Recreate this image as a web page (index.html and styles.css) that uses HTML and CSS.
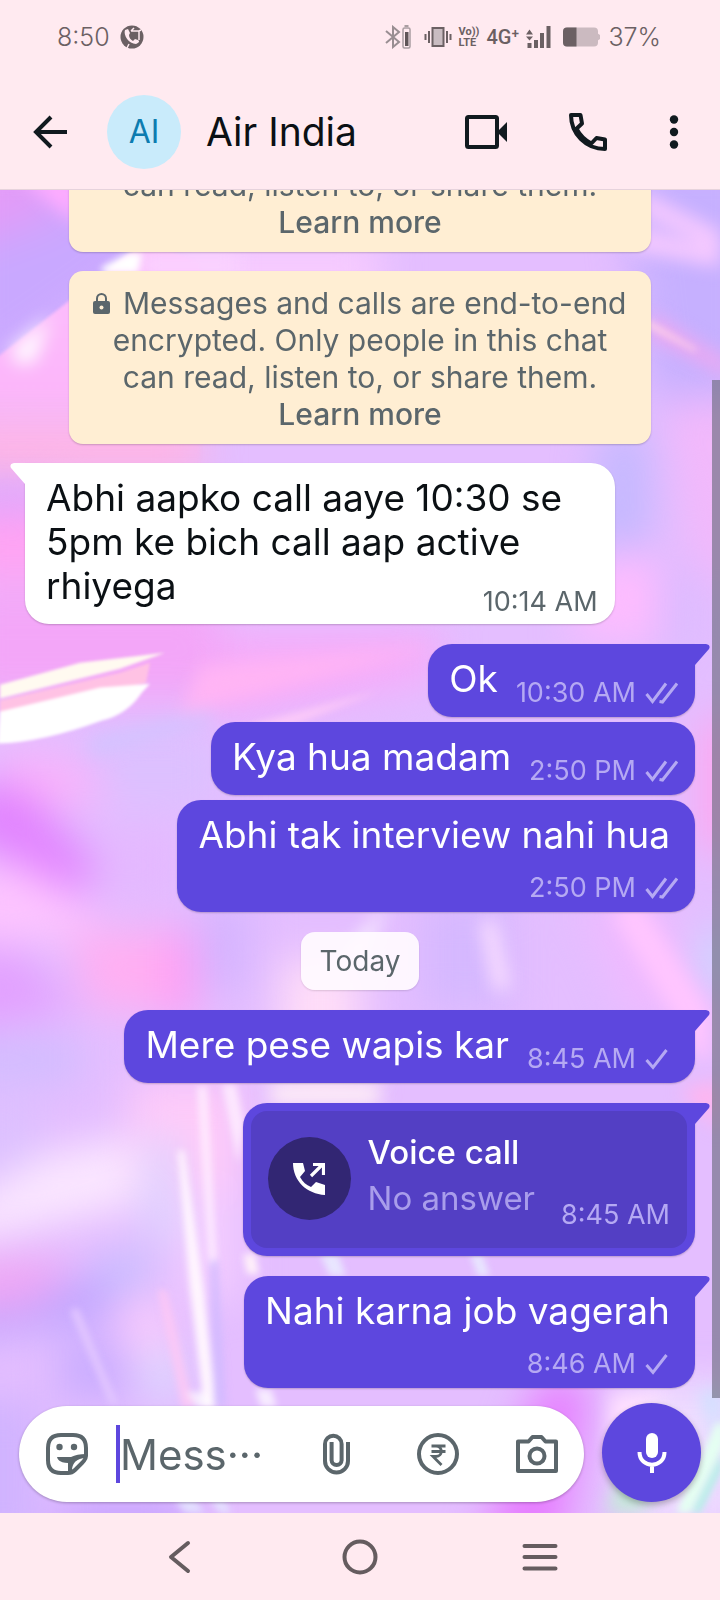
FILE: index.html
```html
<!DOCTYPE html>
<html lang="en">
<head>
<meta charset="utf-8">
<meta name="viewport" content="width=device-width, initial-scale=1">
<title>Air India</title>
<link rel="stylesheet" href="styles.css">
</head>
<body>
<svg class="defs" width="0" height="0" aria-hidden="true">
  <symbol id="check" viewBox="0 0 33 22"><path d="M1.500 12l6.500 7.500L21.500 2" fill="none" stroke="currentColor" stroke-width="3"/></symbol>
  <symbol id="checks" viewBox="0 0 33 22"><path d="M1.500 12l6 7.500L21 1.500M14.500 19.500l3 .5L32 1.500" fill="none" stroke="currentColor" stroke-width="3"/></symbol>
  <symbol id="tail" viewBox="0 0 16 24"><path d="M0 0h12q5 1 3 5L1 21v3H0z" fill="currentColor"/></symbol>
</svg>
<div class="app">
  <div class="status">
    <span class="status-time">8:50</span>
    <svg width="24" height="24" viewBox="0 0 24 24"><circle cx="12" cy="12" r="11.500" fill="#6b6063"/><path d="M5 5c-2 5 4 14 11 14 3-1 4-3 2-4l-3-1-2 2c-2-1-4-3-4-6l1-2-2-4z" fill="#ffeaf0"/><path d="M11 6l3-3M11 6h8v9M19 6l2-1M9 19l-2 4" fill="none" stroke="#ffeaf0" stroke-width="1.500"/></svg>
    <div class="status-right">
      <svg width="26" height="24" viewBox="0 0 26 24"><path d="M1 6l13 11-6 5V2l6 5L1 18" fill="none" stroke="#998e92" stroke-width="2"/><rect x="18" y="3" width="7" height="20" rx="1.500" fill="none" stroke="#a99da1" stroke-width="1.500"/><path d="M19.500 1h4" stroke="#a99da1" stroke-width="2"/><rect x="20" y="7" width="3.500" height="14" fill="#5f5558"/></svg>
      <svg class="vibrate" width="28" height="22" viewBox="0 0 28 22"><rect x="8.500" y="2" width="11" height="18" fill="#c9bcc1" stroke="#6b6063" stroke-width="2"/><path d="M1.500 8v6M5 5v12M23 5v12M26.500 8v6" stroke="#6b6063" stroke-width="2"/></svg>
      <span class="volte"><span>Vo))</span><span>LTE</span></span>
      <span class="net">4G⁺</span>
      <svg width="25" height="22" viewBox="0 0 25 22"><path d="M0 8.500l3.500-5 3.500 5zM0 10.500h7l-3.500 4zM1.500 17h4v5h-4zM8 14h4v8H8zM14 7h4v15h-4zM20.500 0h4v22h-4z" fill="#6b6063"/></svg>
      <svg class="battery" width="38" height="20" viewBox="0 0 38 20"><rect width="35" height="19" y=".5" rx="4" fill="#cbbac0"/><path d="M34 6l3 2v4l-3 2z" fill="#cbbac0"/><path d="M13.500 .5H4a4 4 0 0 0-4 4v11a4 4 0 0 0 4 4h9.500z" fill="#6b6063"/></svg>
      <span class="status-time">37%</span>
    </div>
  </div>
  <header class="header">
    <button class="icon-btn" aria-label="Back"><svg width="34" height="34" viewBox="0 0 34 34"><path d="M18 2L3 17l15 15M3 17h31" fill="none" stroke="#111a1f" stroke-width="4"/></svg></button>
    <div class="avatar">AI</div>
    <h1 class="title">Air India</h1>
    <div class="actions">
      <button class="icon-btn" aria-label="Video call"><svg width="42" height="34" viewBox="0 0 42 34"><rect x="2" y="2" width="30" height="30" rx="1.500" fill="none" stroke="#111a1f" stroke-width="4"/><path d="M32 17L42 7v20z" fill="#111a1f"/></svg></button>
      <button class="icon-btn" aria-label="Voice call"><svg width="38" height="38" viewBox="0 0 38 38"><path d="M2 2h9.500L13 10.500l-5.500 5.200C11 22.500 15.500 27 22.300 30.500L27.500 25l8.500 1.500V36C17 36 2 21 2 2z" fill="none" stroke="#111a1f" stroke-width="4" stroke-linejoin="round"/></svg></button>
      <button class="icon-btn" aria-label="More options"><svg width="10" height="34" viewBox="0 0 10 34"><g fill="#111a1f"><circle cx="5" cy="4.500" r="4.200"/><circle cx="5" cy="17" r="4.200"/><circle cx="5" cy="29.500" r="4.200"/></g></svg></button>
    </div>
  </header>
  <main class="chat">
    <svg class="wallpaper" viewBox="0 189 720 1324" preserveAspectRatio="none" aria-hidden="true">
      <defs>
        <filter id="b30" x="-60%" y="-60%" width="220%" height="220%" color-interpolation-filters="sRGB"><feGaussianBlur stdDeviation="20"/></filter>
        <filter id="b10" x="-60%" y="-60%" width="220%" height="220%" color-interpolation-filters="sRGB"><feGaussianBlur stdDeviation="9"/></filter>
        <filter id="b4" x="-30%" y="-30%" width="160%" height="160%" color-interpolation-filters="sRGB"><feGaussianBlur stdDeviation="3.500"/></filter>
        <filter id="b2" x="-30%" y="-30%" width="160%" height="160%" color-interpolation-filters="sRGB"><feGaussianBlur stdDeviation="1.500"/></filter>
        <linearGradient id="facet" x1="0" y1="0" x2="0" y2="1"><stop offset="0" stop-color="#fcc0fd"/><stop offset=".6" stop-color="#fcb6fa"/><stop offset="1" stop-color="#ffb4e2" stop-opacity="0"/></linearGradient>
      </defs>
      <rect y="189" width="720" height="1324" fill="#e4beff"/>
      <g filter="url(#b30)">
        <path d="M-40 150h200v110L-40 400z" fill="#c9a8ff"/>
        <path d="M160 240h220v60H160z" fill="#f8ccff"/>
        <path d="M-40 150h70l40 60L-40 250z" fill="#e29cf8"/>
        <path d="M620 150h140v240l-110 10z" fill="#c6b0ff"/>
        <path d="M600 430h50v120l-60 10z" fill="#c3b8ff"/>
        <path d="M665 400h80v190l-50-20z" fill="#f2b8fb"/>
        <path d="M600 550h60l10 90h-100z" fill="#fdbcff"/>
        <path d="M665 560h20v90h-20z" fill="#cdb8ff"/>
        <path d="M-40 420h240v50H-40z" fill="#ffb4e2"/>
        <path d="M-40 480h90v30H-40z" fill="#d8a5ff"/>
        <path d="M-40 510h120v70H-40z" fill="#ffa3f3"/>
        <path d="M-40 590h260v110H-40z" fill="#f3a6f8"/>
        <path d="M220 630h220v50l-220 40z" fill="#f6acfa"/>
        <path d="M80 735h140v70H80z" fill="#dcc0ff"/>
        <path d="M0 750l90 10 20 40-110 10z" fill="#f9b2fb"/>
        <path d="M-40 785l60 0 90 90-30 20-120-60z" fill="#e183ff"/>
        <path d="M-40 870l60-5 80 50-20 25H-40z" fill="#fdc4ff"/>
        <path d="M90 830h90v70H90z" fill="#e4b8ff"/>
        <path d="M-40 950h60l60 60-120 20z" fill="#e2a0ff"/>
        <path d="M70 930h110l20 80H90z" fill="#ffaff2"/>
        <path d="M165 930h30v90h-30z" fill="#ff9cf4"/>
        <path d="M-40 1040h120v40H-40z" fill="#cfbcff"/>
        <path d="M200 900h50v90h-50z" fill="#d4b4ff"/>
        <path d="M420 900h90v110h-90z" fill="#d5b8ff"/>
        <path d="M580 900l80 0 60 120h-90z" fill="#efbaff"/>
        <path d="M700 720h50v130h-50z" fill="#ffa6f0"/>
        <path d="M695 930h50v60h-50z" fill="#cfd4ff"/>
        <path d="M280 960h80v120h-80z" fill="#ffddf8"/>
        <path d="M-40 1100h80v60l-80 30z" fill="#dcc0ff"/>
        <path d="M130 1080h110v110H130z" fill="#ffcbf9"/>
        <path d="M180 1190h60v110h-60z" fill="#f3ccff"/>
        <path d="M-40 1205l80-50 90-20 10 70-90 20-90 20z" fill="#fae6ff"/>
        <path d="M145 1135h35v110h-35z" fill="#dcd2ff"/>
        <path d="M-40 1260h110l-20 50-90 10z" fill="#f0a6f4"/>
        <path d="M-40 1310l60 0 60-30 60-20-40 60-140 20z" fill="#bca4ff"/>
        <path d="M100 1255h50v30h-50z" fill="#c2bfff"/>
        <path d="M60 1340h60l10 60H60z" fill="#c8acff"/>
        <path d="M120 1300h40l30 80h-50z" fill="#f9cbfc"/>
        <path d="M145 1350h35v50h-35z" fill="#d8d8ff"/>
        <path d="M-40 1400h80v150h-80z" fill="#d0b3ff"/>
        <path d="M60 1500h130v50H60z" fill="#c5a2ff"/>
        <path d="M540 1380h50l-30 170h-80z" fill="#e67cff"/>
        <path d="M625 1380h120v150H625z" fill="#eedcff"/>
      </g>
      <g filter="url(#b2)">
        <path d="M145 240L-10 362v120h210V262z" fill="url(#facet)"/>
      </g>
      <g filter="url(#b10)">
        <path d="M18 175h60v50z" fill="#ffacff"/>
        <path d="M640 190l80 40v20l-80-38zM640 228l80 20v18l-90-18z" fill="#f8caff"/>
        <path d="M650 312l80 50v14l-80-40z" fill="#f0a8f0"/>
        <path d="M200 665l240-20-260 70z" fill="#ffb4f4"/>
        <path d="M90 740l120-30v12l-120 32z" fill="#d0c4ff"/>
        <path d="M340 960l50-60-30 60z" fill="#fff"/>
        <path d="M480 920l15 70 15-2-15-68z" fill="#fbe0ff"/>
        <path d="M610 910l90 150h10v-50l-70-110z" fill="#ffc5ff"/>
        <path d="M270 1084h110v20H270z" fill="#fff0f6"/>
        <path d="M680 1090l40-10v50z" fill="#ffb5ef"/>
        <path d="M605 1513l40-100 20 0-20 100z" fill="#c4e8d8"/>
        <path d="M700 1390h20v60z" fill="#c9e4ff"/>
        <path d="M610 1394h60l-60 60z" fill="#ffe0ff"/>
        <path d="M10 350l40-34-15 44-15 4z" fill="#fff"/>
        <path d="M140 252h100v24H140z" fill="#fad2ff"/>
      </g>
      <g filter="url(#b4)">
        <path d="M102 266l26-14h14l-4 20h-36z" fill="#fff"/>
        <path d="M646 318l50 30 0 3-50-26z" fill="#ffd2e8"/>
        <path d="M250 724l130-34-116 46z" fill="#ffcdf8" opacity=".8"/>
        <path d="M197 1086l10 0 10 180-8 0zM222 1084h14l8 40-6 40z" fill="#fff0ff" opacity=".8"/>
        <path d="M178 1150l6 0 20 140 12 118-12 0-14-118z" fill="#fff6fe"/>
        <path d="M158 1290l8 0 28 118h-12z" fill="#ffc8f4" opacity=".8"/>
        <path d="M210 1260l8 0 8 146h-12z" fill="#cdb9ff" opacity=".7"/>
        <path d="M243 1254h12l4 20h-12z" fill="#fff0fa"/>
        <path d="M70 1310l8-2 40 96h-8z" fill="#e2c6ff"/>
        <path d="M320 1254h18l8 22h-16zM470 1254h12l8 22h-12z" fill="#eaf0ff" opacity=".8"/>
        <path d="M186 1392h18l10 16h-16zM255 1389h16l6 18h-16z" fill="#fff" opacity=".7"/>
        <path d="M175 1500h20l10 13h-20zM210 1500h14l8 13h-12z" fill="#e5eaff" opacity=".8"/>
        <path d="M676 1513l40-90 8 0v22l-34 68z" fill="#e4fff2"/>
        <path d="M692 1513l30-60v16l-22 44z" fill="#b2f0e6"/>
      </g>
      <g filter="url(#b2)">
        <path d="M0 684l80-22 85-10-45 16L0 698z" fill="#fffaf0"/>
        <path d="M0 700l120-28 30-10-4 20-146 30z" fill="#ffc2e4"/>
        <path d="M0 711l100-24 50-4-8 9q-15 22-40 28-60 22-104 23z" fill="#fff"/>
      </g>
    </svg>
    <div class="messages">
      <div class="notice">can read, listen to, or share them. <a class="learn" href="#">Learn more</a></div>
      <div class="notice spaced"><svg class="lock" width="17" height="21" viewBox="0 0 17 21"><path d="M4 8V5.500a4.500 4.500 0 0 1 9 0V8" fill="none" stroke="#5b666b" stroke-width="2"/><rect y="8" width="17" height="13" rx="2" fill="#5b666b"/><circle cx="8.500" cy="14.500" r="2" fill="#ffeed3"/></svg> Messages and calls are end-to-end encrypted. Only people in this chat can read, listen to, or share them. <a class="learn" href="#">Learn more</a></div>
      <div class="bubble in spaced"><svg class="tail" width="16" height="24"><use href="#tail"/></svg><p class="text">Abhi aapko call aaye 10:30 se 5pm ke bich call aap active rhiyega<span class="meta">10:14 AM</span></p></div>
      <div class="bubble out spaced"><svg class="tail" width="16" height="24"><use href="#tail"/></svg><p class="text">Ok</p><div class="meta">10:30 AM<svg width="33" height="22"><use href="#checks"/></svg></div></div>
      <div class="bubble out"><p class="text">Kya hua madam</p><div class="meta">2:50 PM<svg width="33" height="22"><use href="#checks"/></svg></div></div>
      <div class="bubble out stacked"><p class="text">Abhi tak interview nahi hua</p><div class="meta">2:50 PM<svg width="33" height="22"><use href="#checks"/></svg></div></div>
      <div class="day spaced">Today</div>
      <div class="bubble out spaced"><svg class="tail" width="16" height="24"><use href="#tail"/></svg><p class="text">Mere pese wapis kar</p><div class="meta">8:45 AM<svg width="33" height="22"><use href="#check"/></svg></div></div>
      <div class="bubble out call spaced"><svg class="tail" width="16" height="24"><use href="#tail"/></svg>
        <div class="call-card">
          <div class="call-icon"><svg width="32" height="32" viewBox="0 0 32 32"><path d="M0 0h10l2 8-5 6c3 5 6 8 11 10l5-5 9 3v10C14 31 0 18 0 0z" fill="#fff"/><path d="M18 13L29 2M20 1.500h10.500V12" fill="none" stroke="#fff" stroke-width="3.200"/></svg></div>
          <div class="call-text"><strong>Voice call</strong><span>No answer</span></div>
          <div class="meta">8:45 AM</div>
        </div>
      </div>
      <div class="bubble out stacked spaced"><svg class="tail" width="16" height="24"><use href="#tail"/></svg><p class="text">Nahi karna job vagerah</p><div class="meta">8:46 AM<svg width="33" height="22"><use href="#check"/></svg></div></div>
      <div class="scrollbar"></div>
    </div>
    <form class="composer">
      <div class="field">
        <button type="button" class="icon-btn" aria-label="Stickers"><svg width="42" height="42" viewBox="0 0 42 42"><path d="M15 2h12q13 0 13 13v8q0 3-4 7l-7 7q-3 3-7 3h-7Q2 40 2 27V15Q2 2 15 2z" fill="none" stroke="#5b666b" stroke-width="4"/><circle cx="13.500" cy="14" r="3.200" fill="#5b666b"/><circle cx="28" cy="14" r="3.200" fill="#5b666b"/><path d="M11 24h14c4-2 9-3 15-3v4c-8 0-14 4-14 13h-4v-8c-6 0-10-2-11-6z" fill="#5b666b"/></svg></button>
        <span class="caret"></span>
        <input class="input" type="text" aria-label="Message" placeholder="Mess···">
        <button type="button" class="icon-btn" aria-label="Attach"><svg width="28" height="42" viewBox="0 0 28 42"><path d="M25 9v19a11.500 11.500 0 0 1-23 0V11a8.300 8.300 0 0 1 16.600 0v16a5 5 0 0 1-10 0V9" fill="none" stroke="#5b666b" stroke-width="4"/></svg></button>
        <button type="button" class="icon-btn pay" aria-label="Pay"><svg width="42" height="42" viewBox="0 0 42 42"><circle cx="21" cy="21" r="19" fill="none" stroke="#5b666b" stroke-width="4"/><path d="M14.500 13h14M14.500 18.500h14M15 13h4c7 0 7 10.500 0 10.500h-3l8.500 8.500" fill="none" stroke="#5b666b" stroke-width="2.800"/></svg></button>
        <button type="button" class="icon-btn camera" aria-label="Camera"><svg width="42" height="38" viewBox="0 0 42 38"><path d="M2 6.500h10.500l4-4.500h9l4 4.500H40V36H2z" fill="none" stroke="#5b666b" stroke-width="4" stroke-linejoin="round"/><circle cx="21" cy="21" r="7.500" fill="none" stroke="#5b666b" stroke-width="4"/></svg></button>
      </div>
      <button type="button" class="mic" aria-label="Record voice message"><svg width="30" height="40" viewBox="0 0 30 40"><rect x="9" width="12" height="25" rx="6" fill="#fff"/><path d="M2.500 19c0 17 25 17 25 0M15 31v9" fill="none" stroke="#fff" stroke-width="4"/></svg></button>
    </form>
  </main>
  <nav class="nav">
    <button class="icon-btn" aria-label="Back"><svg width="24" height="34" viewBox="0 0 24 34"><path d="M20 3L3 17l17 14" fill="none" stroke="#655c5f" stroke-width="4" stroke-linecap="round" stroke-linejoin="round"/></svg></button>
    <button class="icon-btn" aria-label="Home"><svg width="36" height="36" viewBox="0 0 36 36"><circle cx="18" cy="18" r="15.500" fill="none" stroke="#655c5f" stroke-width="4"/></svg></button>
    <button class="icon-btn" aria-label="Recent apps"><svg width="36" height="28" viewBox="0 0 36 28"><path d="M2.500 3h31M2.500 14h31M2.500 25.500h31" stroke="#655c5f" stroke-width="4" stroke-linecap="round"/></svg></button>
  </nav>
</div>
</body>
</html>
```

FILE: styles.css
```css
* { box-sizing: border-box; }
body { margin: 0; font-family: Inter, Roboto, sans-serif; font-weight: 400; }
button { font: inherit; border: 0; padding: 0; background: none; }
svg { display: block; flex: none; }
.defs { position: absolute; }
.app { display: flex; flex-direction: column; height: 100vh; background: #ffeaf0; }

.status { display: flex; align-items: center; gap: 10px; padding: 22px 59px 0 57px; height: 52px; color: #6b6063; font-weight: 300; }
.status-time { font-size: 25px; line-height: 30px; }
.status-right { display: flex; align-items: center; gap: 7px; margin-left: auto; }
.vibrate { margin-left: 6px; }
.volte { display: flex; flex-direction: column; font: 700 11px/11px Roboto, sans-serif; }
.net { font: 500 20px/24px Roboto, sans-serif; }
.battery { margin-left: 5px; }

.header { display: flex; align-items: center; height: 138px; padding: 22px 41px 0 33px; border-bottom: 1px solid #e6d3dc; }
.icon-btn { display: flex; align-items: center; justify-content: center; flex: none; }
.avatar { display: flex; align-items: center; justify-content: center; width: 74px; height: 74px; margin: 0 25px 0 40px; border-radius: 50%; background: #c9ebfb; color: #0c7cb0; font-size: 32px; flex: none; }
.title { flex: 1; margin: 0; font-size: 39px; line-height: 48px; font-weight: 400; color: #0b1014; }
.actions { display: flex; align-items: center; gap: 62px; }

.chat { position: relative; flex: 1; min-height: 0; display: flex; flex-direction: column; }
.wallpaper { position: absolute; inset: 0; width: 100%; height: 100%; }
.messages { position: relative; flex: 1; min-height: 0; overflow: hidden; display: flex; flex-direction: column; justify-content: flex-end; gap: 5px; padding: 0 25px 11px; }
.messages > * { flex: none; }
.spaced { margin-top: 15px; }
.scrollbar { position: absolute; right: 0; top: 190px; bottom: 1px; width: 8px; background: #6f6f83a8; }

.notice { align-self: center; width: 87%; padding: 14px 16px 11px; border-radius: 14px; background: #ffeed3; color: #5b666b; font-size: 30px; line-height: 37px; text-align: center; box-shadow: 0 1px 2px #0003; }
.notice.spaced, .in.spaced { margin-top: 14px; }
.lock { display: inline-block; margin-right: 4px; }
.learn { display: block; color: inherit; font-weight: 500; text-decoration: none; }

.bubble { position: relative; display: flex; align-items: flex-end; padding: 13px 17px 10px 21px; border-radius: 24px; box-shadow: 0 1px 2px #0003; }
.text { margin: 0; padding-bottom: 6px; font-size: 37px; line-height: 44px; }
.meta { display: flex; align-items: center; gap: 9px; font-size: 27px; line-height: 28px; white-space: nowrap; }
.tail { position: absolute; top: 0; }
.in { align-self: flex-start; display: block; max-width: 88%; padding-bottom: 8px; background: #fff; color: #0b1014; border-top-left-radius: 0; }
.in .meta { float: right; margin-top: 24px; color: #5b666b; }
.in > .tail { left: -15px; color: #fff; transform: scaleX(-1); }
.out { align-self: flex-end; gap: 18px; background: #5d47de; color: #fff; }
.out > .tail { right: -15px; color: #5d47de; }
.out:has(.tail) { border-top-right-radius: 0; }
.out .meta { color: #b5a9f3; }
.stacked { flex-direction: column; gap: 11px; }
.stacked > .text { padding-right: 8px; }

.day { align-self: center; padding: 11px 19px; border-radius: 14px; background: #fffafff0; color: #5b666b; font-size: 28px; line-height: 36px; box-shadow: 0 1px 2px #0002; }

.call { padding: 8px; }
.call-card { display: flex; align-items: center; padding: 17px 17px 19px; border-radius: 16px; background: #533fc4; min-height: 137px; }
.call-icon { display: flex; align-items: center; justify-content: center; width: 83px; height: 83px; border-radius: 50%; background: #322673; }
.call-text { display: flex; flex-direction: column; margin: 0 26px 0 17px; font-size: 33px; line-height: 46px; color: #a99deb; padding-bottom: 8px; }
.call-text strong { color: #fff; font-weight: 500; }
.call-card .meta { align-self: flex-end; }

.composer { position: relative; display: flex; align-items: flex-end; gap: 18px; margin: 0; padding: 4px 19px 11px; }
.field { display: flex; align-items: center; flex: 1; min-width: 0; height: 96px; padding: 0 26px 0 27px; border-radius: 48px; background: #fff; box-shadow: 0 1px 3px #0004; }
.caret { width: 4px; height: 58px; margin-left: 28px; background: #5d47de; flex: none; }
.input { flex: 1; min-width: 0; border: 0; padding: 0; outline: 0; background: none; font: inherit; font-size: 42px; color: #0b1014; }
.input::placeholder { color: #5b666b; opacity: 1; }
.pay { margin: 0 57px 0 66px; }
.mic { display: flex; align-items: center; justify-content: center; width: 99px; height: 99px; border-radius: 50%; background: #5d47de; box-shadow: 0 3px 6px #0004; flex: none; }

.nav { display: grid; grid-template-columns: repeat(3, 1fr); justify-items: center; align-items: center; height: 87px; padding: 0 12.5%; }
```
